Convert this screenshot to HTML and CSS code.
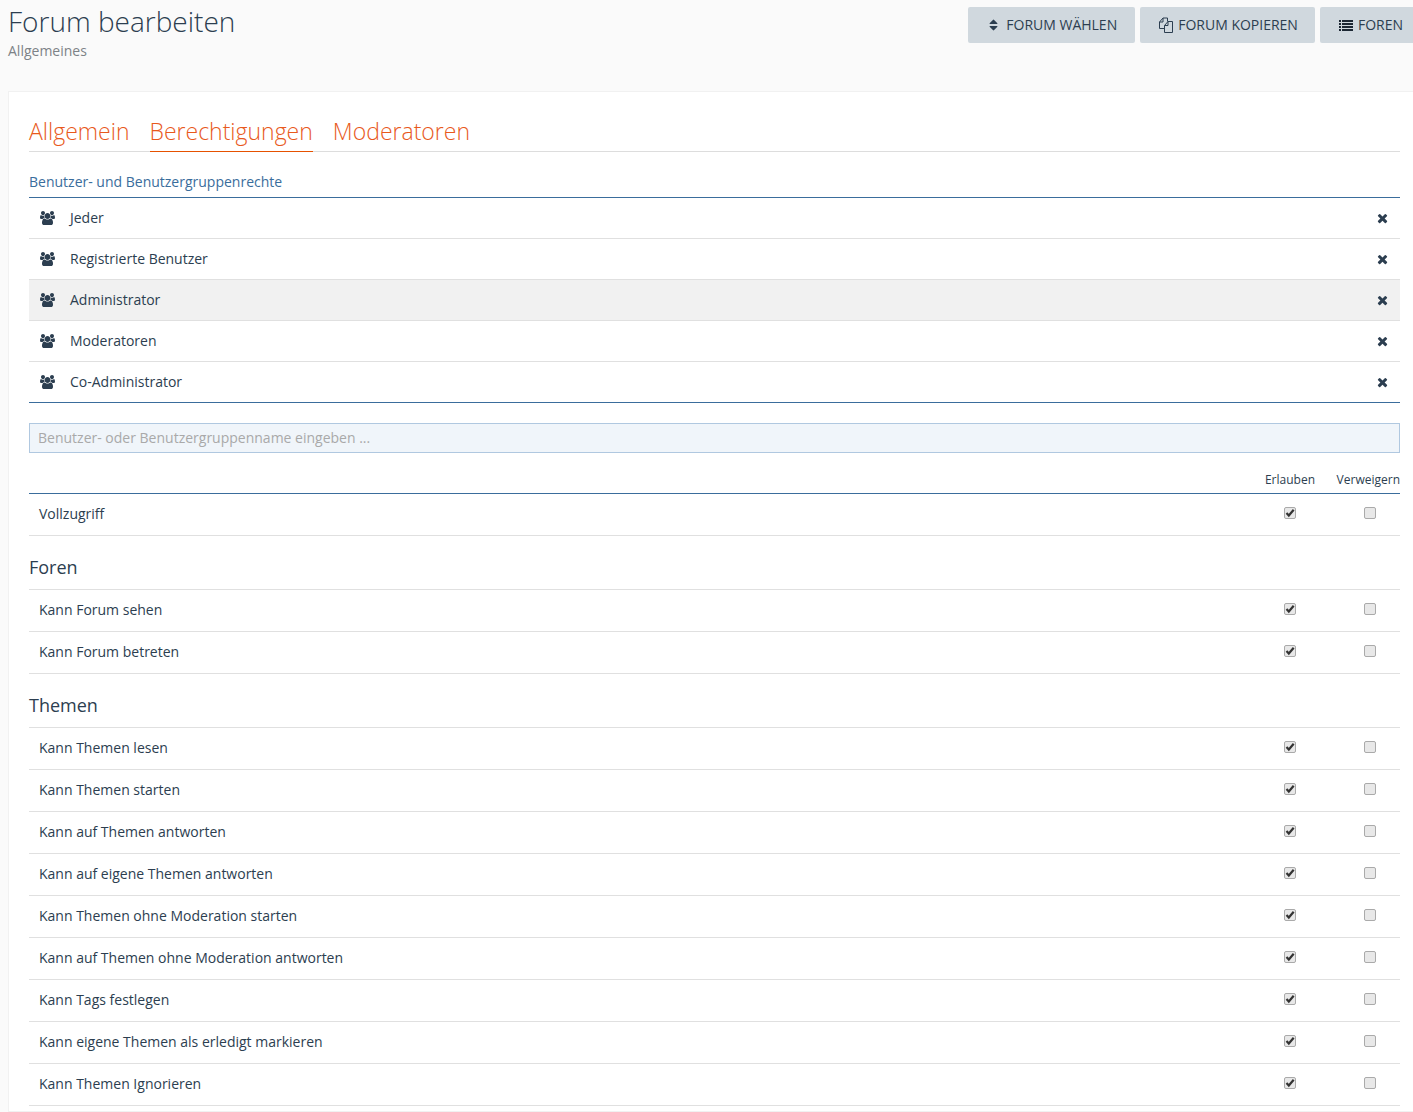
FILE: index.html
```html
<!DOCTYPE html>
<html lang="de">
<head>
    <meta charset="UTF-8">
    <title>Forum bearbeiten</title>
    <link rel="stylesheet" href="styles.css">
</head>
<body>
    <svg class="defs" aria-hidden="true">
        <symbol id="i-users" viewBox="0 0 1920 1792"><path d="M593 896q-162 5-265 128h-134q-82 0-138-40.500t-56-118.500q0-353 124-353 6 0 43.500 21t97.500 42.500 119 21.500q67 0 133-23-5 37-5 66 0 139 81 256zm1071 637q0 120-73 189.500t-194 69.500h-874q-121 0-194-69.500t-73-189.500q0-53 3.500-103.500t14-109 26.500-108.500 43-97.500 62-81 85.500-53.500 111.500-20q10 0 43 21.500t73 48 107 48 135 21.500 135-21.500 107-48 73-48 43-21.500q61 0 111.500 20t85.500 53.500 62 81 43 97.500 26.500 108.500 14 109 3.500 103.500zm-1024-1277q0 106-75 181t-181 75-181-75-75-181 75-181 181-75 181 75 75 181zm704 384q0 159-112.500 271.500t-271.500 112.500-271.500-112.500-112.500-271.500 112.500-271.500 271.500-112.500 271.500 112.500 112.500 271.500zm576 225q0 78-56 118.500t-138 40.500h-134q-103-123-265-128 81-117 81-256 0-29-5-66 66 23 133 23 59 0 119-21.500t97.500-42.500 43.500-21q124 0 124 353zm-128-609q0 106-75 181t-181 75-181-75-75-181 75-181 181-75 181 75 75 181z"/></symbol>
        <symbol id="i-times" viewBox="0 0 1408 1792"><path d="M1298 1202q0 40-28 68l-136 136q-28 28-68 28t-68-28l-294-294-294 294q-28 28-68 28t-68-28l-136-136q-28-28-28-68t28-68l294-294-294-294q-28-28-28-68t28-68l136-136q28-28 68-28t68 28l294 294 294-294q28-28 68-28t68 28l136 136q28 28 28 68t-28 68l-294 294 294 294q28 28 28 68z"/></symbol>
        <symbol id="i-check" viewBox="0 0 12 12"><path d="M2.500 6.100 4.800 8.500 9.700 2.800" fill="none" stroke="#333" stroke-width="2.200"/></symbol>
    </svg>

    <div class="page">
        <header class="page-header">
            <div>
                <h1>Forum bearbeiten</h1>
                <p class="subtitle">Allgemeines</p>
            </div>
            <nav class="actions">
                <a class="button" href="#">
                    <svg class="icon" viewBox="0 0 1024 1792"><path d="M1024 1088q0 26-19 45l-448 448q-19 19-45 19t-45-19l-448-448q-19-19-19-45t19-45 45-19h896q26 0 45 19t19 45zm0-384q0 26-19 45t-45 19h-896q-26 0-45-19t-19-45 19-45l448-448q19-19 45-19t45 19l448 448q19 19 19 45z"/></svg>
                    Forum wählen
                </a>
                <a class="button tight" href="#">
                    <svg class="icon copy" viewBox="0 0 14 16"><path d="M5.500 11.500H.5V5L4 1h4.500v3.500M4 1v4H.5M5.500 8.500l3.500-4h4.500v11h-8zM9 4.500v4H5.500" fill="none" stroke="#2c3e50"/></svg>
                    Forum kopieren
                </a>
                <a class="button tight" href="#">
                    <svg class="icon list" viewBox="0 0 14 11"><path d="M0 0h2v2H0zM3 0h11v2H3zM0 3h2v2H0zM3 3h11v2H3zM0 6h2v2H0zM3 6h11v2H3zM0 9h2v2H0zM3 9h11v2H3z"/></svg>
                    Foren
                </a>
            </nav>
        </header>

        <main class="panel">
            <ul class="tabs">
                <li><a href="#">Allgemein</a></li>
                <li class="active"><a href="#">Berechtigungen</a></li>
                <li><a href="#">Moderatoren</a></li>
            </ul>

            <h2 class="section-title">Benutzer- und Benutzergruppenrechte</h2>
            <ul class="group-list">
                <li><svg class="users"><use href="#i-users"/></svg><span>Jeder</span><svg class="times"><use href="#i-times"/></svg></li>
                <li><svg class="users"><use href="#i-users"/></svg><span>Registrierte Benutzer</span><svg class="times"><use href="#i-times"/></svg></li>
                <li class="selected"><svg class="users"><use href="#i-users"/></svg><span>Administrator</span><svg class="times"><use href="#i-times"/></svg></li>
                <li><svg class="users"><use href="#i-users"/></svg><span>Moderatoren</span><svg class="times"><use href="#i-times"/></svg></li>
                <li><svg class="users"><use href="#i-users"/></svg><span>Co-Administrator</span><svg class="times"><use href="#i-times"/></svg></li>
            </ul>

            <input class="search" type="text" placeholder="Benutzer- oder Benutzergruppenname eingeben ...">

            <div class="perm-head">
                <span>Erlauben</span>
                <span>Verweigern</span>
            </div>
            <div class="perm-row"><span>Vollzugriff</span><i class="box"><svg><use href="#i-check"/></svg></i><i class="box"></i></div>

            <h3>Foren</h3>
            <div class="perm-row"><span>Kann Forum sehen</span><i class="box"><svg><use href="#i-check"/></svg></i><i class="box"></i></div>
            <div class="perm-row"><span>Kann Forum betreten</span><i class="box"><svg><use href="#i-check"/></svg></i><i class="box"></i></div>

            <h3>Themen</h3>
            <div class="perm-row"><span>Kann Themen lesen</span><i class="box"><svg><use href="#i-check"/></svg></i><i class="box"></i></div>
            <div class="perm-row"><span>Kann Themen starten</span><i class="box"><svg><use href="#i-check"/></svg></i><i class="box"></i></div>
            <div class="perm-row"><span>Kann auf Themen antworten</span><i class="box"><svg><use href="#i-check"/></svg></i><i class="box"></i></div>
            <div class="perm-row"><span>Kann auf eigene Themen antworten</span><i class="box"><svg><use href="#i-check"/></svg></i><i class="box"></i></div>
            <div class="perm-row"><span>Kann Themen ohne Moderation starten</span><i class="box"><svg><use href="#i-check"/></svg></i><i class="box"></i></div>
            <div class="perm-row"><span>Kann auf Themen ohne Moderation antworten</span><i class="box"><svg><use href="#i-check"/></svg></i><i class="box"></i></div>
            <div class="perm-row"><span>Kann Tags festlegen</span><i class="box"><svg><use href="#i-check"/></svg></i><i class="box"></i></div>
            <div class="perm-row"><span>Kann eigene Themen als erledigt markieren</span><i class="box"><svg><use href="#i-check"/></svg></i><i class="box"></i></div>
            <div class="perm-row"><span>Kann Themen Ignorieren</span><i class="box"><svg><use href="#i-check"/></svg></i><i class="box"></i></div>
        </main>
    </div>
</body>
</html>
```

FILE: styles.css
```css
* {
    margin: 0;
    padding: 0;
    box-sizing: border-box;
}

html, body {
    height: 100%;
    overflow: hidden;
}

body {
    background: #fafafa;
    color: #2c3e50;
    font-family: "Open Sans", sans-serif;
    font-size: 14px;
}

.defs {
    display: none;
}

.page {
    display: flex;
    flex-direction: column;
    width: 1421px;
    height: 100%;
    padding-left: 8px;
}

.page-header {
    display: flex;
    justify-content: space-between;
    flex: none;
    height: 91px;
}

h1 {
    font-size: 28px;
    font-weight: 300;
    line-height: 34px;
    margin-top: 4px;
    color: #2c3e50;
}

.subtitle {
    color: #7d8287;
    line-height: 20px;
    margin-top: 3px;
}

.actions {
    display: flex;
    gap: 5px;
    margin: 7px 1px 0 0;
    height: 36px;
}

.button {
    display: flex;
    align-items: center;
    gap: 6px;
    padding: 0 18px 2px 21px;
    background: #d0d8de;
    border-radius: 2px;
    color: #2c3e50;
    text-decoration: none;
    text-transform: uppercase;
}

.button.tight {
    gap: 5px;
    padding: 0 17px 2px 19px;
}

.icon {
    width: 9px;
    height: 14px;
    margin: 2px 2px 0 0;
    fill: #2c3e50;
}

.icon.copy {
    width: 14px;
    height: 16px;
    margin-right: 0;
}

.icon.list {
    width: 14px;
    height: 11px;
    margin-right: 0;
    fill: #1c2733;
}

.panel {
    flex: 1;
    min-height: 0;
    background: #fff;
    border: 1px solid #f1f1f1;
    padding: 20px 20px 0;
}

.tabs {
    display: flex;
    gap: 20px;
    list-style: none;
    border-bottom: 1px solid #ddd;
    height: 40px;
}

.tabs a {
    display: block;
    height: 39px;
    font-size: 23px;
    font-weight: 300;
    line-height: 39px;
    color: #e8591c;
    text-decoration: none;
}

.tabs .active {
    border-bottom: 1px solid #e65100;
    height: 40px;
}

.section-title {
    font-size: 14px;
    font-weight: 400;
    line-height: 20px;
    color: #3a6d9c;
    margin-top: 20px;
    padding-bottom: 5px;
    border-bottom: 1px solid #3a6d9c;
}

.group-list {
    list-style: none;
    border-bottom: 1px solid #3a6d9c;
}

.group-list li {
    display: flex;
    align-items: center;
    height: 41px;
    padding: 0 10px;
    border-bottom: 1px solid #e0e0e0;
}

.group-list li:last-child {
    height: 40px;
    border-bottom: 0;
}

.group-list .selected {
    background: #f1f1f1;
}

.group-list span {
    flex: 1;
    margin: -2px 0 0 15px;
}

.users {
    width: 15px;
    height: 16px;
    margin-left: 1px;
    fill: #2c3e50;
}

.times {
    width: 11px;
    height: 14px;
    margin: 1px 2px 0 0;
    fill: #2c3e50;
}

.search {
    display: block;
    width: 100%;
    height: 30px;
    margin-top: 20px;
    padding: 0 8px 2px;
    background: #f0f5fa;
    border: 1px solid #b0c8e0;
    font: 14px "Open Sans", sans-serif;
}

.search::placeholder {
    color: #a9a9a9;
}

.perm-head {
    display: grid;
    grid-template-columns: 1fr 60px 60px;
    column-gap: 20px;
    height: 41px;
    padding-top: 18px;
    font-size: 12px;
    line-height: 17px;
    text-align: center;
    border-bottom: 1px solid #3a6d9c;
}

.perm-head span:first-child {
    grid-column: 2;
}

.perm-head span:last-child {
    white-space: nowrap;
    direction: rtl;
}

.perm-row {
    display: grid;
    grid-template-columns: 1fr 60px 60px;
    column-gap: 20px;
    align-items: center;
    justify-items: center;
    height: 42px;
    padding-left: 10px;
    border-bottom: 1px solid #e0e0e0;
}

.perm-row span {
    justify-self: start;
    margin-top: -2px;
}

h3 {
    font-size: 18px;
    font-weight: 400;
    line-height: 24px;
    padding: 19px 0 10px;
    height: 54px;
    border-bottom: 1px solid #e0e0e0;
}

.box {
    display: block;
    width: 12px;
    height: 12px;
    margin-top: -3px;
    background: #e8e8e8;
    border: 1px solid #aaa;
    border-radius: 2px;
}

.box svg {
    display: block;
    width: 12px;
    height: 12px;
    margin: -1px;
}
```
